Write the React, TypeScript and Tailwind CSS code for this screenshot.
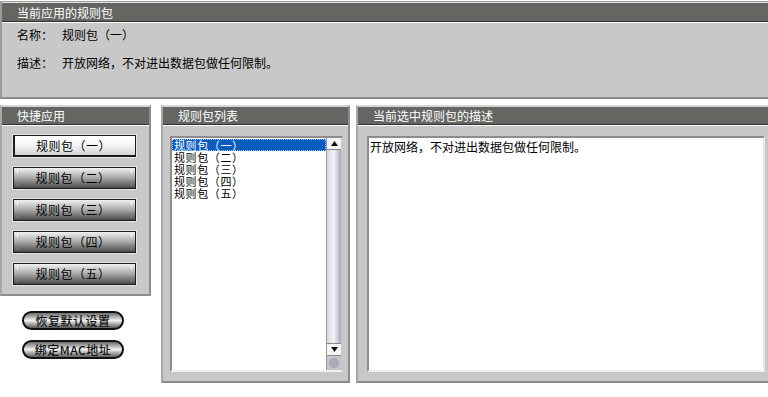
import React from "react";

const FONT = { fontFamily: '"Noto Sans CJK SC", "Noto Sans", sans-serif' };

function Header({ title, tall }: { title: string; tall?: boolean }) {
  return (
    <>
      <div
        className={`${tall ? "h-[19px] leading-[19px]" : "h-[18px] leading-[18px]"} bg-[#646662] border-b border-[#333333] text-white text-[12px] pl-[15px]`}
      >
        {title}
      </div>
      <div className="h-px bg-white" />
    </>
  );
}

function QuickButton({ label, active }: { label: string; active?: boolean }) {
  return (
    <div
      className={`relative w-[123px] h-[22px] ml-[11px] flex items-center justify-center text-[12px] text-black border border-[#1a1a1a] outline outline-1 outline-[#e8e8e8] ${
        active
          ? "bg-gradient-to-b from-[#ffffff] via-[#f4f4f4] to-[#d4d4d4] border-l-2 border-b-2"
          : "bg-gradient-to-b from-[#f2f2f2] via-[#a8a8a8] to-[#4a4a4a]"
      }`}
    >
      {!active && (
        <>
          <span className="absolute left-[3px] top-[2px] w-px h-[3px] bg-white" />
          <span className="absolute right-[3px] top-[2px] w-px h-[3px] bg-white" />
          <span className="absolute left-[3px] bottom-[2px] w-px h-[3px] bg-[#888]" />
          <span className="absolute right-[3px] bottom-[2px] w-px h-[3px] bg-[#888]" />
        </>
      )}
      <span className="ml-[-3px] tracking-[0.5px]">{label}</span>
    </div>
  );
}

function PillButton({ label }: { label: string }) {
  return (
    <div className="w-[102px] h-[19px] ml-[22px] rounded-full border-2 border-[#111] bg-gradient-to-b from-[#6e6e6e] via-[#f2f2f2] to-[#5c5c5c] flex items-center justify-center text-[12px] font-medium text-[#111] leading-none tracking-[0.5px]">
      {label}
    </div>
  );
}

export default function App() {
  const items = ["规则包（一）", "规则包（二）", "规则包（三）", "规则包（四）", "规则包（五）"];
  return (
    <div className="w-[768px] h-[397px] bg-white overflow-hidden" style={FONT}>
      {/* Top panel */}
      <div className="mt-px border-t border-[#9c9c9c] border-l-2 border-l-[#9a9a9a] bg-[#c8c8c8] border-b-2 border-b-[#8a8a8a] h-[98px] flex flex-col">
        <div className="h-px bg-[#e2e2e2]" />
        <Header title="当前应用的规则包" tall />
        <div className="flex flex-col gap-[12px] pt-[4px] pl-[15px] text-[12px] text-black leading-[16px]">
          <div className="flex">
            <span className="w-[45px]">名称：</span>
            <span>规则包（一）</span>
          </div>
          <div className="flex">
            <span className="w-[45px]">描述：</span>
            <span>开放网络，不对进出数据包做任何限制。</span>
          </div>
        </div>
      </div>

      <div className="flex mt-[6px]">
        {/* Left column */}
        <div className="w-[151px] flex flex-col">
          <div className="h-[191px] bg-[#c8c8c8] border-2 border-t-[#d6d6d6] border-l-[#a8a8a8] border-r-[#8c8c8c] border-b-[#8c8c8c] flex flex-col">
            <Header title="快捷应用" />
            <div className="flex flex-col gap-[10px] pt-[9px]">
              <QuickButton label="规则包（一）" active />
              <QuickButton label="规则包（二）" />
              <QuickButton label="规则包（三）" />
              <QuickButton label="规则包（四）" />
              <QuickButton label="规则包（五）" />
            </div>
          </div>
          <div className="flex flex-col gap-[10px] mt-[15px]">
            <PillButton label="恢复默认设置" />
            <PillButton label="绑定MAC地址" />
          </div>
        </div>

        {/* Middle panel */}
        <div className="w-[189px] h-[278px] ml-[10px] bg-[#c8c8c8] border-2 border-t-[#d6d6d6] border-l-[#a8a8a8] border-r-[#8c8c8c] border-b-[#8c8c8c] flex flex-col">
          <Header title="规则包列表" />
          <div className="mt-[10px] ml-[7px] mr-[5px] h-[236px] flex bg-white border-2 border-t-[#8c8c8c] border-l-[#8c8c8c] border-r-[#c8c8c8] border-b-[#f0f0f0]">
            <div className="flex-1 flex flex-col text-[11px] leading-[12px] text-black pt-px">
              {items.map((it, i) => (
                <div
                  key={it}
                  className={`h-[12px] pl-[2px] tracking-[0.6px] ${
                    i === 0 ? "bg-[#0a5cbf] text-white outline outline-1 outline-dotted outline-[#9fc4ff] -outline-offset-1" : ""
                  }`}
                >
                  {it}
                </div>
              ))}
            </div>
            {/* scrollbar */}
            <div className="w-[15px] flex flex-col border-l border-[#9a9a9a]">
              <div className="h-[12px] bg-[#f4f4f4] border-b border-[#8a8a8a] flex items-center justify-center">
                <svg width="7" height="5" viewBox="0 0 7 5"><path d="M3.5 0L7 5H0z" fill="#111" /></svg>
              </div>
              <div className="flex-1 bg-gradient-to-r from-[#d8d8e0] via-[#f4f4f8] to-[#a8a8b8]" />
              <div className="h-[13px] bg-[#f4f4f4] border-t border-b border-[#8a8a8a] flex items-center justify-center">
                <svg width="7" height="5" viewBox="0 0 7 5"><path d="M0 0H7L3.5 5z" fill="#111" /></svg>
              </div>
              <div className="h-[14px] bg-[#c4c4cc] flex items-center justify-center">
                <div className="w-[10px] h-[10px] rounded-full bg-[#a8a8b8]" />
              </div>
            </div>
          </div>
        </div>

        {/* Right panel */}
        <div className="flex-1 h-[278px] ml-[6px] bg-[#c8c8c8] border-2 border-r-0 border-t-[#d6d6d6] border-l-[#a8a8a8] border-b-[#8c8c8c] flex flex-col">
          <Header title="当前选中规则包的描述" />
          <div className="mt-[10px] ml-[9px] mr-[3px] h-[236px] bg-white border-2 border-t-[#8c8c8c] border-l-[#8c8c8c] border-r-[#e8e8e8] border-b-[#f0f0f0] text-[12px] leading-[14px] text-black pl-px pt-[2px]">
            开放网络，不对进出数据包做任何限制。
          </div>
        </div>
      </div>
    </div>
  );
}
